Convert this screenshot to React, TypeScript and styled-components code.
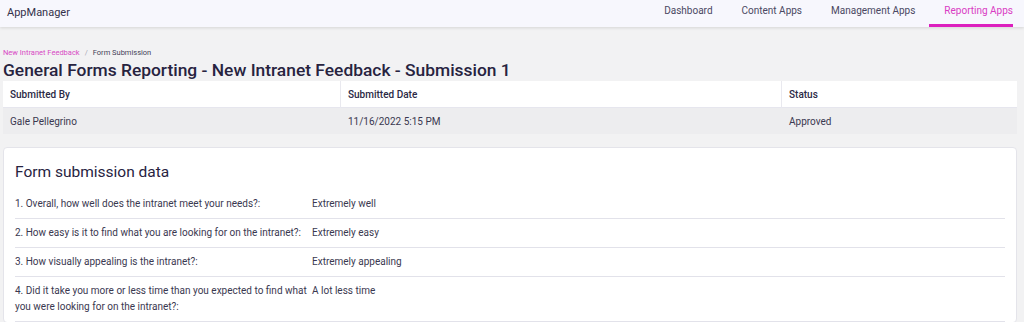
import styled, { createGlobalStyle } from 'styled-components';

const GlobalStyle = createGlobalStyle`
    html, body {
        margin: 0;
        padding: 0;
        background: #f2f2f3;
        font-family: Roboto, "Liberation Sans", sans-serif;
        color: #2b2945;
    }
`;

const Page = styled.div`
    width: 1024px;
    height: 322px;
    overflow: hidden;
`;

const NavBar = styled.header`
    display: flex;
    align-items: stretch;
    justify-content: space-between;
    height: 27px;
    padding: 0 11px 0 7px;
    background: #f7f7fd;
    box-shadow: 0 1px 3px rgba(0, 0, 0, 0.12);
`;

const Brand = styled.div`
    display: flex;
    align-items: center;
    font-size: 11px;
    color: #33314a;
    padding-bottom: 3px;
`;

const NavList = styled.nav`
    display: flex;
    align-items: stretch;
    gap: 14px;
`;

const NavItem = styled.a<{ $active?: boolean }>`
    display: flex;
    align-items: center;
    padding: 0 0 3px 15px;
    font-size: 10px;
    color: ${({ $active }) => ($active ? '#d93cc3' : '#4a4862')};
    text-decoration: none;
    border-bottom: 3px solid ${({ $active }) => ($active ? '#dc1fbe' : 'transparent')};
`;

const Content = styled.main`
    padding: 21px 7px 0 3px;
`;

const Breadcrumb = styled.div`
    display: flex;
    gap: 5px;
    font-size: 7.5px;
    line-height: 10px;
    color: #444257;
`;

const Crumb = styled.span`
    color: #d84ac4;
`;

const Separator = styled.span`
    color: #a8a8b4;
`;

const Title = styled.h1`
    margin: 0;
    padding-top: 2px;
    font-size: 17.4px;
    font-weight: 500;
    line-height: 21px;
    color: #27233f;
`;

const Table = styled.div`
    display: grid;
    grid-template-columns: 338px 441px 1fr;
    font-size: 10px;
`;

const HeadCell = styled.div<{ $divider?: boolean }>`
    height: 26px;
    display: flex;
    align-items: center;
    padding: 0 7px;
    background: #ffffff;
    font-weight: 500;
    color: #2b2945;
    border-bottom: 1px solid #e6e6ee;
    border-right: ${({ $divider }) => ($divider ? '1px solid #e9e9ef' : 'none')};
`;

const BodyCell = styled.div`
    height: 26px;
    display: flex;
    align-items: center;
    padding: 0 7px;
    background: #ededef;
    color: #3a3850;
`;

const Card = styled.section`
    margin-top: 13px;
    background: #ffffff;
    border: 1px solid #e4e4ea;
    border-radius: 4px;
    padding: 12px 11px 0;
`;

const CardTitle = styled.h2`
    margin: 0 0 6px;
    font-size: 15.5px;
    font-weight: 400;
    line-height: 24px;
    color: #27233f;
`;

const Row = styled.div`
    display: grid;
    grid-template-columns: 297px 1fr;
    padding: 6px 0;
    font-size: 10px;
    line-height: 16px;
    color: #3a3850;
    border-bottom: 1px solid #e2e2ea;
`;

const Label = styled.div`
    padding-right: 3px;
`;

const Value = styled.div``;

const answers = [
    ['1. Overall, how well does the intranet meet your needs?:', 'Extremely well'],
    ['2. How easy is it to find what you are looking for on the intranet?:', 'Extremely easy'],
    ['3. How visually appealing is the intranet?:', 'Extremely appealing'],
    [
        '4. Did it take you more or less time than you expected to find what you were looking for on the intranet?:',
        'A lot less time',
    ],
];

export default function App() {
    return (
        <Page>
            <GlobalStyle />
            <NavBar>
                <Brand>AppManager</Brand>
                <NavList>
                    <NavItem>Dashboard</NavItem>
                    <NavItem>Content Apps</NavItem>
                    <NavItem>Management Apps</NavItem>
                    <NavItem $active>Reporting Apps</NavItem>
                </NavList>
            </NavBar>
            <Content>
                <Breadcrumb>
                    <Crumb>New Intranet Feedback</Crumb>
                    <Separator>/</Separator>
                    <span>Form Submission</span>
                </Breadcrumb>
                <Title>General Forms Reporting - New Intranet Feedback - Submission 1</Title>
                <Table>
                    <HeadCell $divider>Submitted By</HeadCell>
                    <HeadCell $divider>Submitted Date</HeadCell>
                    <HeadCell>Status</HeadCell>
                    <BodyCell>Gale Pellegrino</BodyCell>
                    <BodyCell>11/16/2022 5:15 PM</BodyCell>
                    <BodyCell>Approved</BodyCell>
                </Table>
                <Card>
                    <CardTitle>Form submission data</CardTitle>
                    {answers.map(([q, a]) => (
                        <Row key={q}>
                            <Label>{q}</Label>
                            <Value>{a}</Value>
                        </Row>
                    ))}
                </Card>
            </Content>
        </Page>
    );
}
